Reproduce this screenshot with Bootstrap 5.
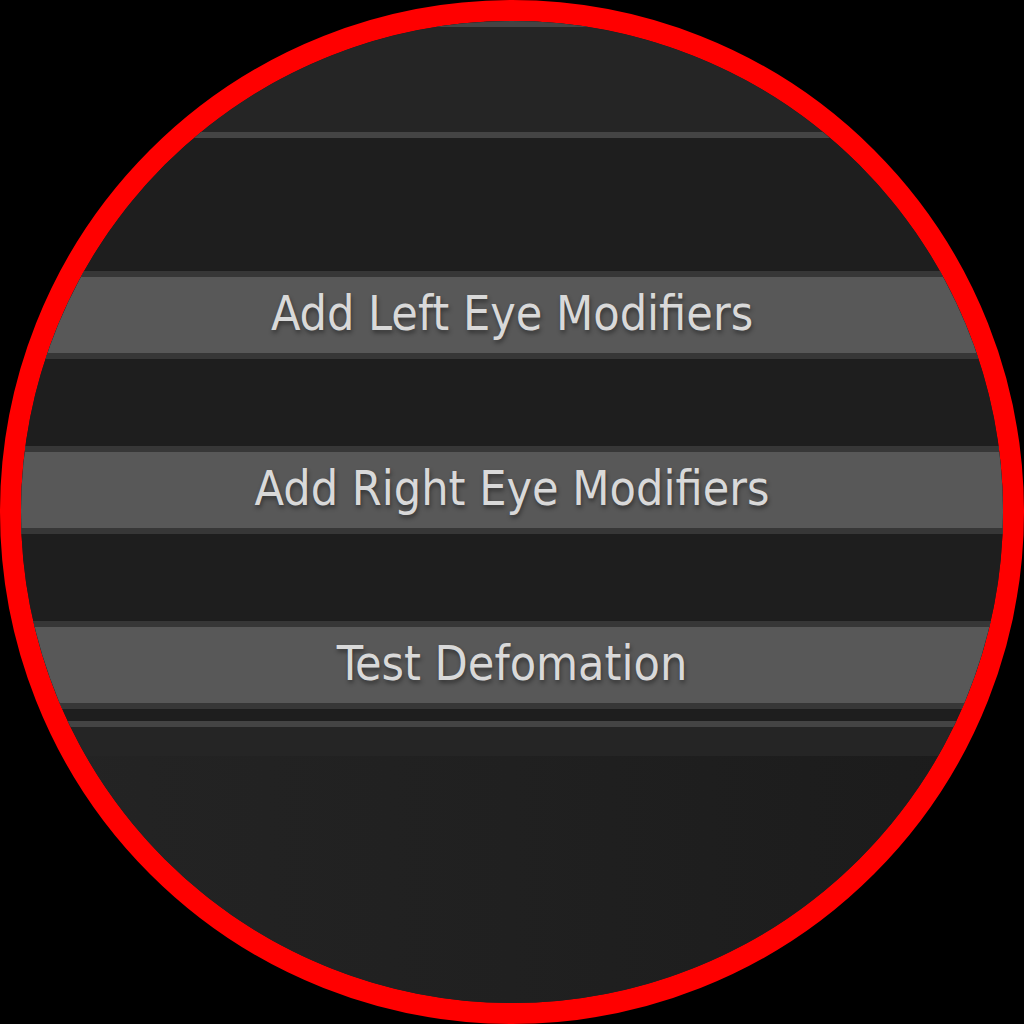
<!DOCTYPE html>
<html lang="en">
<head>
<meta charset="utf-8">
<meta name="viewport" content="width=device-width, initial-scale=1">
<title>Eye Modifiers</title>
<link href="https://cdn.jsdelivr.net/npm/bootstrap@5.3.0/dist/css/bootstrap.min.css" rel="stylesheet">
<style>
  body { background: #000; font-family: "DejaVu Sans Condensed", "DejaVu Sans", sans-serif; }
  .lens { aspect-ratio: 1; max-width: 100vh; border: 21px solid #f00; background: #1e1e1e; }
  .lens-head { height: 117px; background: #252525; border-top: 6px solid #444; border-bottom: 6px solid #444; }
  .lens-panel { padding: 133px 0 12px; gap: 87px; background: #1e1e1e; }
  .tool-btn {
    --bs-btn-color: #d9d9d9; --bs-btn-bg: #585858; --bs-btn-hover-color: #fff; --bs-btn-hover-bg: #656565;
    --bs-btn-font-size: 48px; --bs-btn-line-height: 72px;
    height: 88px; padding: 0 0 4px; border: 0 solid #373737; border-width: 6px 0; text-shadow: 1px 3px 4px rgba(0,0,0,.4);
  }
  .tool-btn:hover { border-color: #373737; }
  .lens-strip { height: 35px; background: #252525; border-top: 6px solid #444; }
  .lens-view { background: linear-gradient(90deg, #242424, #202020 50%, #1b1b1b); }
</style>
<script src="https://cdn.jsdelivr.net/npm/bootstrap@5.3.0/dist/js/bootstrap.bundle.min.js"></script>
</head>
<body>
<main class="lens w-100 mx-auto rounded-circle overflow-hidden d-flex flex-column">
  <div class="lens-head flex-shrink-0"></div>
  <section class="lens-panel d-flex flex-column flex-shrink-0" aria-label="Eye modifiers">
    <button type="button" class="btn tool-btn rounded-0 w-100">Add Left Eye Modifiers</button>
    <button type="button" class="btn tool-btn rounded-0 w-100">Add Right Eye Modifiers</button>
    <button type="button" class="btn tool-btn rounded-0 w-100">Test Defomation</button>
  </section>
  <div class="lens-strip flex-shrink-0"></div>
  <div class="lens-view flex-grow-1"></div>
</main>
</body>
</html>
